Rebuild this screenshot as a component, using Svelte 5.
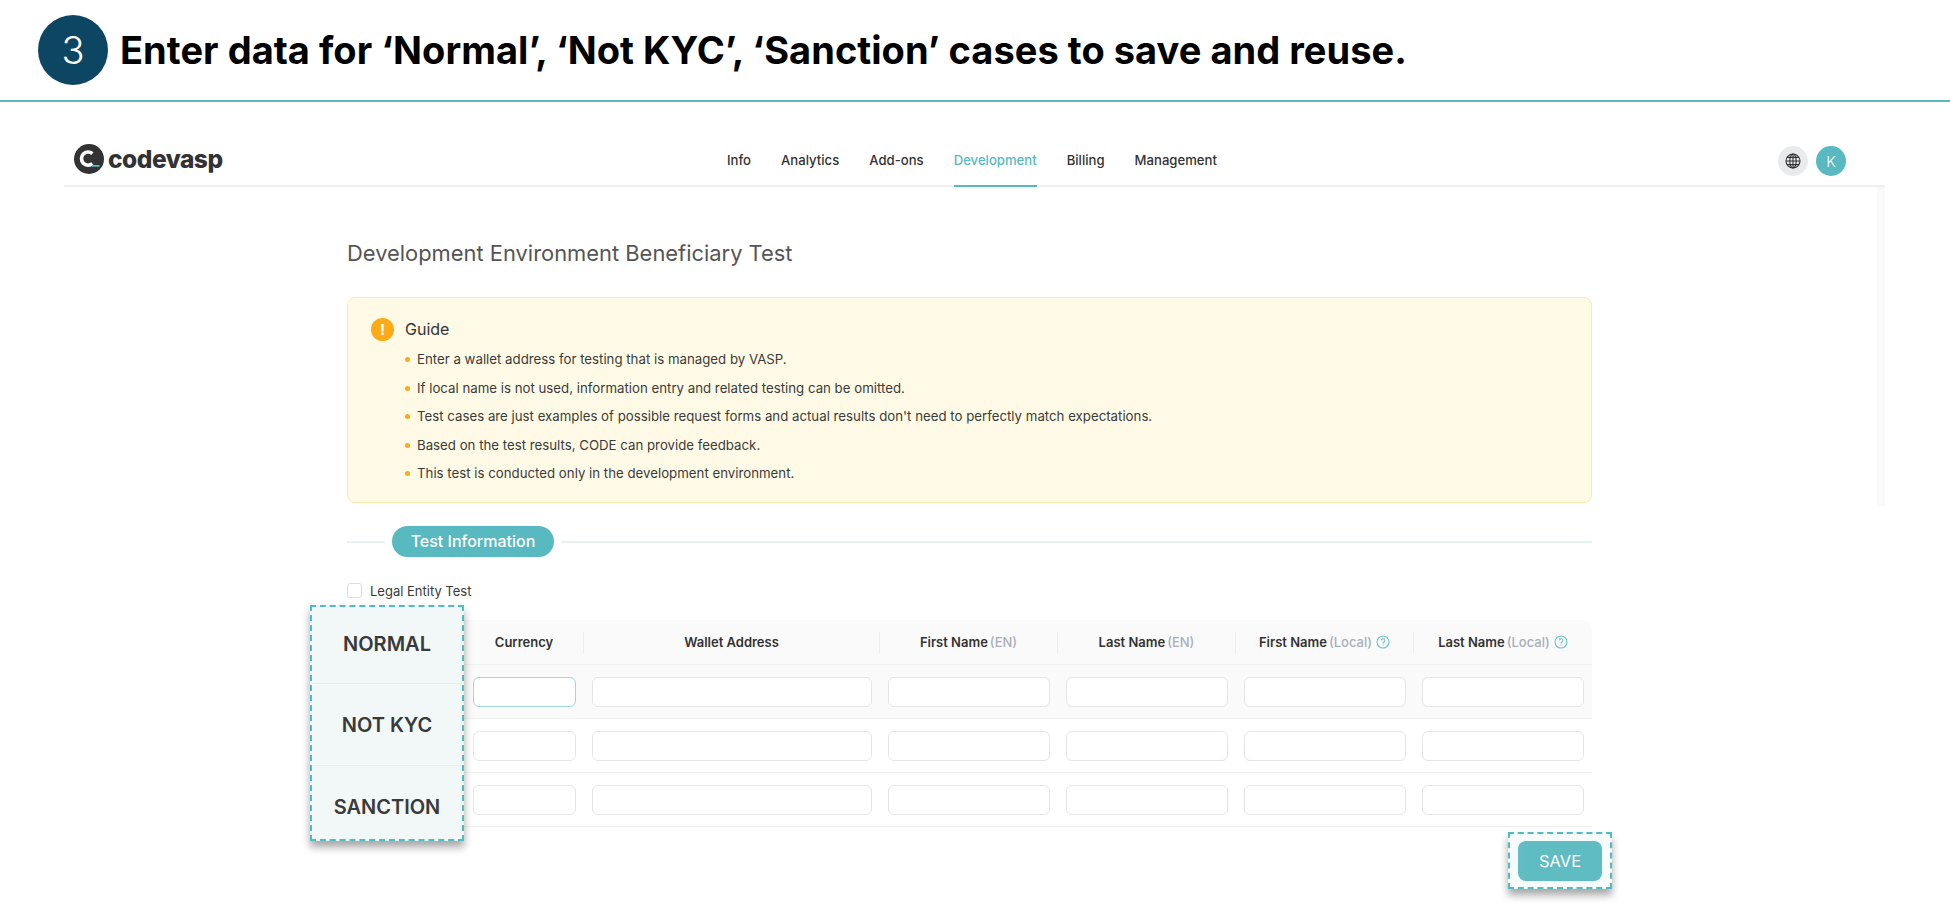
<script lang="ts">
	const navItems = ['Info', 'Analytics', 'Add-ons', 'Development', 'Billing', 'Management'];
	const guideItems = [
		'Enter a wallet address for testing that is managed by VASP.',
		'If local name is not used, information entry and related testing can be omitted.',
		"Test cases are just examples of possible request forms and actual results don't need to perfectly match expectations.",
		'Based on the test results, CODE can provide feedback.',
		'This test is conducted only in the development environment.'
	];
	const columns = [
		{ label: 'First Name', note: '(EN)', help: false },
		{ label: 'Last Name', note: '(EN)', help: false },
		{ label: 'First Name', note: '(Local)', help: true },
		{ label: 'Last Name', note: '(Local)', help: true }
	];
	const cases = ['NORMAL', 'NOT KYC', 'SANCTION'];
</script>

<header class="step">
	<div class="step-num">3</div>
	<h1>Enter data for ‘Normal’, ‘Not KYC’, ‘Sanction’ cases to save and reuse.</h1>
</header>

<div class="frame">
	<nav class="nav">
		<div class="logo">
			<svg width="30" height="30" viewBox="0 0 30 30">
				<circle cx="15" cy="15" r="15" fill="#333" />
				<path d="M18.4 9.6a6.6 6.6 0 1 0 0 10" fill="none" stroke="#fff" stroke-width="3.6" />
				<rect x="18" y="21" width="7.5" height="1.8" fill="#58b9c0" />
			</svg>
			<span class="logo-text">codevasp</span>
		</div>
		<ul class="menu">
			{#each navItems as item}
				<li class:active={item === 'Development'}>{item}</li>
			{/each}
		</ul>
		<div class="nav-right">
			<div class="globe">
				<svg width="16" height="16" viewBox="0 0 16 16" fill="none" stroke="#333" stroke-width="1.1">
					<circle cx="8" cy="8" r="7" />
					<ellipse cx="8" cy="8" rx="3.2" ry="7" />
					<path d="M8 1v14M1 8h14M2 4.4h12M2 11.6h12" />
				</svg>
			</div>
			<div class="avatar">K</div>
		</div>
	</nav>
	<div class="scroll-track"></div>

	<main class="content">
		<h2>Development Environment Beneficiary Test</h2>

		<section class="guide">
			<div class="guide-head">
				<span class="warn">!</span>
				<span>Guide</span>
			</div>
			<ul>
				{#each guideItems as item}
					<li>{item}</li>
				{/each}
			</ul>
		</section>

		<div class="divider">
			<span class="pill">Test Information</span>
		</div>

		<label class="check">
			<span class="box"></span>
			Legal Entity Test
		</label>

		<div class="table-wrap">
			<div class="row head">
				<div></div>
				<div class="th"><span>Currency</span></div>
				<div class="th"><span>Wallet Address</span></div>
				{#each columns as col}
					<div class="th">
						<span>{col.label}</span><span class="note">{col.note}</span>
						{#if col.help}
							<svg class="help" width="14" height="14" viewBox="0 0 14 14" fill="none" stroke="#6cc3c9" stroke-width="1.1">
								<circle cx="7" cy="7" r="6" />
								<path d="M5.3 5.6a1.75 1.75 0 1 1 2.6 1.5c-.6.35-.9.7-.9 1.4M7 9.6v1" />
							</svg>
						{/if}
					</div>
				{/each}
			</div>

			{#each cases as c, r}
				<div class="row body" class:first={r === 0}>
					<div></div>
					{#each Array(6) as _, i}
						<div class="td"><div class="input" class:focused={r === 0 && i === 0}></div></div>
					{/each}
				</div>
			{/each}

			<div class="cases">
				{#each cases as c}
					<div class="case">{c}</div>
				{/each}
			</div>
		</div>

		<div class="actions">
			<div class="save-mark">
				<button class="save">SAVE</button>
			</div>
		</div>
	</main>
</div>

<style>
	:global(body) {
		margin: 0;
		background: #fff;
		font-family: Inter, 'Noto Sans', sans-serif;
		color: #333;
	}

	.step {
		height: 100px;
		display: flex;
		align-items: center;
		gap: 12px;
		padding-left: 38px;
		border-bottom: 2px solid #58b7bb;
	}

	.step-num {
		width: 70px;
		height: 70px;
		border-radius: 50%;
		background: #0d4663;
		color: #fff;
		font-family: Inter, sans-serif;
		font-weight: 300;
		font-size: 38px;
		display: flex;
		align-items: center;
		justify-content: center;
	}

	h1 {
		margin: 0;
		font-family: Inter, sans-serif;
		font-weight: 700;
		font-size: 38px;
		letter-spacing: 0.04px;
		color: #000;
	}

	.frame {
		position: relative;
		margin: 0 65px 0 64px;
	}

	.nav {
		height: 50px;
		padding-top: 33px;
		display: flex;
		align-items: center;
		border-bottom: 2px solid #f0f0f0;
	}

	.logo {
		width: 653px;
		display: flex;
		align-items: center;
		gap: 4px;
		margin-left: 10px;
		margin-top: -2px;
	}

	.logo-text {
		font-family: Inter, sans-serif;
		font-weight: 800;
		font-size: 24.5px;
		letter-spacing: -0.5px;
		color: #333;
	}

	.menu {
		align-self: flex-start;
		margin: 0;
		padding: 0;
		list-style: none;
		display: flex;
		gap: 30px;
		font-size: 13.13px;
		font-weight: 500;
		color: #333;
	}

	.menu li {
		height: 50px;
		line-height: 50px;
		border-bottom: 2px solid transparent;
	}

	.menu li.active {
		color: #58b9c0;
		border-color: #58b9c0;
	}

	.nav-right {
		margin-left: auto;
		margin-right: 39px;
		display: flex;
		gap: 8px;
		margin-top: 2px;
	}

	.globe,
	.avatar {
		width: 30px;
		height: 30px;
		border-radius: 50%;
		display: flex;
		align-items: center;
		justify-content: center;
	}

	.globe {
		background: #e9eaec;
	}

	.avatar {
		background: #58b9c0;
		color: #fff;
		font-size: 15px;
		font-weight: 300;
	}

	.scroll-track {
		position: absolute;
		right: 0;
		top: 85px;
		width: 8px;
		height: 319px;
		background: #fafafa;
	}

	.content {
		margin-left: 283px;
		width: 1245px;
		padding-bottom: 23px;
	}

	h2 {
		margin: 0;
		padding-top: 53px;
		font-size: 21.9px;
		line-height: 27px;
		font-weight: 400;
		color: #555;
	}

	.guide {
		margin-top: 30px;
		box-sizing: border-box;
		height: 206px;
		padding: 20px 23px;
		background: #fffae6;
		border: 1.5px solid #fde9a9;
		border-radius: 8px;
	}

	.guide-head {
		display: flex;
		align-items: center;
		gap: 11px;
		font-size: 16px;
		line-height: 23px;
		color: #333;
	}

	.warn {
		width: 23px;
		height: 23px;
		border-radius: 50%;
		background: #fcab16;
		color: #fff;
		font-weight: 700;
		font-size: 15px;
		text-align: center;
	}

	.guide ul {
		margin: 4px 0 0;
		padding: 0 0 0 34px;
		list-style: none;
	}

	.guide li {
		position: relative;
		padding-left: 12px;
		font-size: 13.25px;
		line-height: 28.5px;
		color: #3a3a3a;
	}

	.guide li::before {
		content: '';
		position: absolute;
		left: 0;
		top: 12px;
		width: 5px;
		height: 5px;
		border-radius: 50%;
		background: #fca91a;
	}

	.divider {
		margin-top: 23px;
		height: 31px;
		display: flex;
		align-items: center;
		background: linear-gradient(#e6f2f2, #e6f2f2) left center / 100% 2px no-repeat;
	}

	.pill {
		margin-left: 45px;
		height: 31px;
		line-height: 31px;
		width: 162px;
		text-align: center;
		border-radius: 16px;
		background: #58b9c0;
		color: #fff;
		font-size: 16px;
		font-weight: 500;
		box-shadow: 0 0 0 7px #fff;
	}

	.check {
		margin-top: 26px;
		height: 15px;
		display: flex;
		align-items: center;
		gap: 8px;
		font-size: 13px;
		color: #3a3a3a;
	}

	.box {
		width: 13px;
		height: 13px;
		border: 1px solid #ddd;
		border-radius: 3px;
		background: #fff;
	}

	.table-wrap {
		position: relative;
		margin-top: 22px;
	}

	.row {
		display: grid;
		grid-template-columns: 118px 119px 296px repeat(4, 178px);
	}

	.head {
		height: 44px;
		align-items: center;
		background: #fafafa;
		border-bottom: 1px solid #f0f0f0;
		border-radius: 10px 10px 0 0;
	}

	.th {
		font-size: 13px;
		font-weight: 600;
		color: #333;
		display: flex;
		align-items: center;
		justify-content: center;
		height: 21px;
		border-right: 1px solid #eee;
	}

	.th:last-child {
		border-right: none;
	}

	.note {
		margin-left: 2px;
		font-weight: 500;
		color: #a9aebb;
	}

	.help {
		margin-left: 4px;
	}

	.body {
		height: 53px;
		align-items: center;
		border-bottom: 1px solid #f0f0f0;
	}

	.body.first {
		background: #fafafa;
	}

	.td {
		padding: 0 8px;
	}

	.input {
		box-sizing: border-box;
		height: 30px;
		background: #fff;
		border: 1.5px solid #e6e6e6;
		border-radius: 6px;
	}

	.input.focused {
		border-color: #a0dadd;
	}

	.cases {
		position: absolute;
		left: -37px;
		top: -15px;
		box-sizing: border-box;
		width: 154px;
		height: 236px;
		background: #f2f7f8;
		border: 2px dashed #4fbcc4;
		box-shadow: 0 6px 8px rgba(0, 0, 0, 0.35);
		display: flex;
		flex-direction: column;
	}

	.case {
		display: flex;
		align-items: center;
		justify-content: center;
		font-size: 20px;
		font-weight: 600;
		color: #3a3a3a;
		border-bottom: 1px solid #e8eeee;
	}

	.case:nth-child(1) {
		height: 73px;
		padding-bottom: 3px;
	}

	.case:nth-child(2) {
		height: 81px;
	}

	.case:nth-child(3) {
		flex: 1;
		border-bottom: none;
		padding-top: 8px;
	}

	.actions {
		display: flex;
		justify-content: flex-end;
		margin-top: 5px;
		margin-right: -20px;
	}

	.save-mark {
		box-sizing: border-box;
		width: 104px;
		height: 57px;
		padding: 7px 8px;
		background: #f6fbfc;
		border: 2px dashed #4fbcc4;
		box-shadow: 0 6px 8px rgba(0, 0, 0, 0.35);
	}

	.save {
		display: block;
		width: 84px;
		height: 40px;
		border: none;
		border-radius: 8px;
		background: #58b9c0;
		color: #fff;
		font-family: Inter, sans-serif;
		font-weight: 400;
		font-size: 16.5px;
		opacity: 0.95;
	}
</style>
